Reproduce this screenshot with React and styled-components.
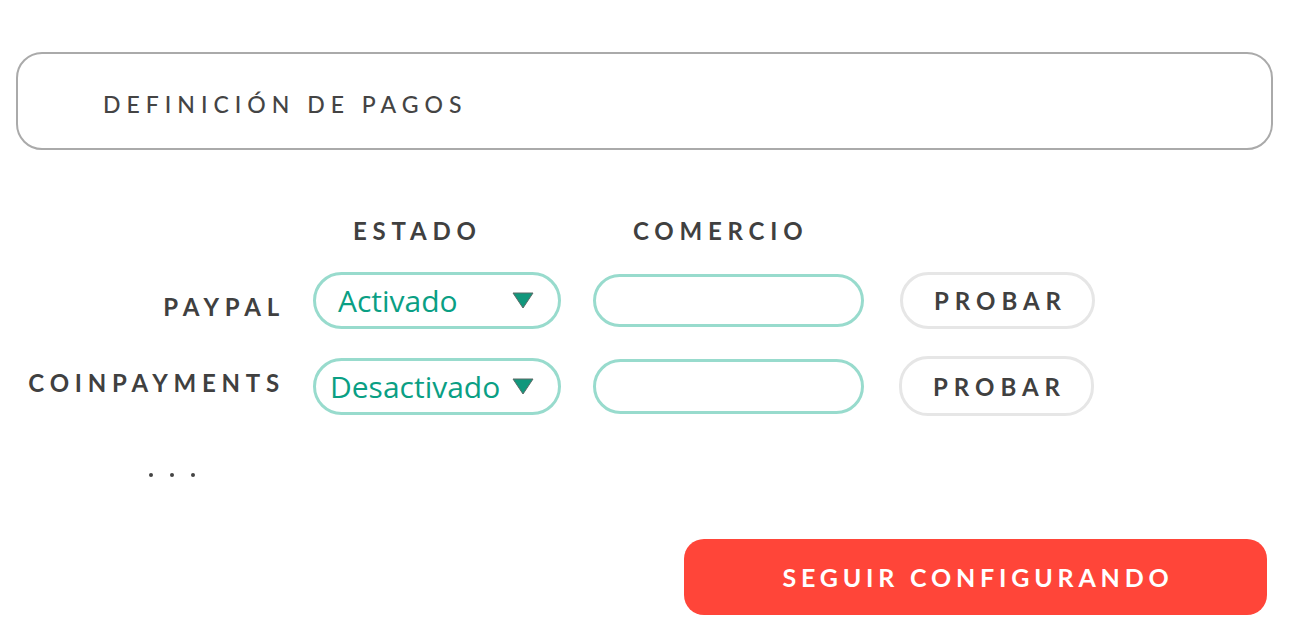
import styled, { createGlobalStyle } from 'styled-components'

const GlobalStyle = createGlobalStyle`
  body {
    margin: 0;
    background: #ffffff;
    font-family: Lato, "Noto Sans", sans-serif;
  }
`

const Page = styled.div`
  width: 1302px;
  padding: 52px 29px 0 16px;
  box-sizing: border-box;
`

const TitleBox = styled.div`
  height: 98px;
  border: 2px solid #aaaaaa;
  border-radius: 26px;
  box-sizing: border-box;
  display: flex;
  align-items: center;
  padding: 5px 0 0 85px;
`

const Title = styled.h1`
  margin: 0;
  font-size: 23px;
  font-weight: 500;
  letter-spacing: 6px;
  color: #444444;
`

const Table = styled.div`
  display: grid;
  grid-template-columns: 265px 248px 271px 199px;
  grid-template-rows: 30px 58px 58px;
  column-gap: 32px;
  row-gap: 28px;
  align-items: center;
  margin-top: 63px;
`

const ColHead = styled.div`
  font-size: 24px;
  font-weight: 700;
  letter-spacing: 5.8px;
  color: #404040;
  padding: 4px 0 0 40px;
`

const Label = styled.div`
  font-size: 24px;
  font-weight: 700;
  letter-spacing: 5.8px;
  color: #404040;
  text-align: right;
  margin-right: -4px;
  transform: translateY(${p => p.$shift || 0}px);
`

const Select = styled.div`
  height: 57px;
  border: 3px solid #98dbcd;
  border-radius: 29px;
  box-sizing: border-box;
  display: flex;
  align-items: center;
  justify-content: space-between;
  padding: 0 24px 0 ${p => p.$pad || 22}px;
  font-family: "Open Sans", "Noto Sans", sans-serif;
  font-size: 30px;
  color: #0a9f84;
`

const Field = styled.div`
  height: ${p => p.$h || 53}px;
  border: 3px solid #98dbcd;
  border-radius: 28px;
  box-sizing: border-box;
`

const TestButton = styled.button`
  width: 195px;
  height: ${p => p.$h || 57}px;
  margin-left: ${p => p.$ml || 4}px;
  border: 3px solid #e6e6e6;
  border-radius: 29px;
  background: #ffffff;
  box-sizing: border-box;
  font-family: Lato, "Noto Sans", sans-serif;
  font-size: 24px;
  font-weight: 700;
  letter-spacing: 6px;
  color: #404040;
  padding: 0 0 0 6px;
`

const Dots = styled.div`
  display: flex;
  gap: 17px;
  padding-left: 133px;
  margin-top: 58px;
  span {
    width: 4px;
    height: 4px;
    border-radius: 50%;
    background: #444444;
  }
`

const Footer = styled.div`
  display: flex;
  justify-content: flex-end;
  margin-top: 62px;
  padding-right: 6px;
`

const NextButton = styled.button`
  width: 583px;
  height: 76px;
  border: none;
  border-radius: 20px;
  background: #ff4539;
  color: #ffffff;
  font-family: Lato, "Noto Sans", sans-serif;
  font-size: 25px;
  font-weight: 700;
  letter-spacing: 4.8px;
  padding: 0 0 0 5px;
`

function Arrow() {
  return (
    <svg width="22" height="17" viewBox="0 0 22 17">
      <polygon points="1,1 21,1 11,16" fill="#11977c" stroke="#5a6b66" strokeWidth="1" strokeLinejoin="round" />
    </svg>
  )
}

const methods = [
  { name: 'PAYPAL', state: 'Activado', pad: 22, shift: 6, fieldH: 53, btnH: 57, ml: 4 },
  { name: 'COINPAYMENTS', state: 'Desactivado', pad: 14, shift: -4, fieldH: 55, btnH: 60, ml: 3 },
]

export default function App() {
  return (
    <Page>
      <GlobalStyle />
      <TitleBox>
        <Title>DEFINICIÓN DE PAGOS</Title>
      </TitleBox>
      <Table>
        <div />
        <ColHead>ESTADO</ColHead>
        <ColHead>COMERCIO</ColHead>
        <div />
        {methods.map(m => (
          <>
            <Label key={m.name} $shift={m.shift}>{m.name}</Label>
            <Select $pad={m.pad}>
              <span>{m.state}</span>
              <Arrow />
            </Select>
            <Field $h={m.fieldH} />
            <TestButton $h={m.btnH} $ml={m.ml}>PROBAR</TestButton>
          </>
        ))}
      </Table>
      <Dots>
        <span />
        <span />
        <span />
      </Dots>
      <Footer>
        <NextButton>SEGUIR CONFIGURANDO</NextButton>
      </Footer>
    </Page>
  )
}
